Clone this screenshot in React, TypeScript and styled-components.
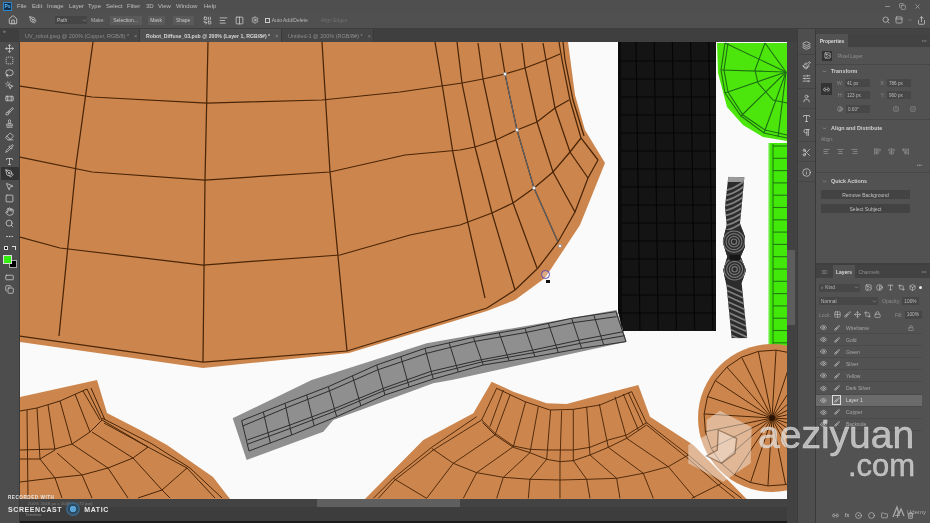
import React from "react";
import styled, { createGlobalStyle } from "styled-components";
import {
  Move, SquareDashed, Lasso, MousePointerClick, Bandage, Brush, Stamp, Eraser, Pipette, Type, PenTool,
  MousePointer2, Square, Hand, Search, MoreHorizontal, Home, Minus, Copy, X, PanelTop, Share, Settings,
  Link2, Image, Eye, Lock, Paintbrush, Crop, Layers, SlidersHorizontal, User, Pilcrow, Scissors,
  Info, Folder, Plus, Trash2, Circle, CircleDot, AlignLeft, AlignCenter, AlignRight, AlignStartVertical,
  AlignCenterVertical, AlignEndVertical, FlipHorizontal, FlipVertical, RectangleHorizontal, Combine, Columns2,
  Grid2x2, Contrast, ChevronDown, Box
} from "lucide-react";

const Global = createGlobalStyle`
  html, body { margin: 0; padding: 0; background: #222; }
  body { font-family: "Liberation Sans", Arial, sans-serif; }
  * { box-sizing: border-box; }
`;

const Shell = styled.div`
  position: relative; width: 930px; height: 523px; overflow: hidden; background: #4c4c4c;
  display: flex; flex-direction: column; color: #c4c4c4; filter: blur(0.35px);
`;
const MenuBar = styled.div`
  height: 12px; display: flex; align-items: center; background: #4f4f4f; font-size: 6px; padding-left: 3px;
`;
const PsLogo = styled.div`
  width: 9px; height: 9px; background: #10304f; border: 1px solid #2f86c8; color: #5db4ee; font-size: 5px; font-weight: 700;
  display: flex; align-items: center; justify-content: center; margin-right: 5px;
`;
const MenuItem = styled.span<{ $w: number }>` width: ${p => p.$w}px; color: #bdbdbd; `;
const WindowControls = styled.div`
  margin-left: auto; display: flex; gap: 8px; padding-right: 9px; color: #bbb; align-items: center;
`;
const OptionsBar = styled.div`
  height: 17px; display: flex; align-items: center; background: #505050; border-bottom: 1px solid #3e3e3e; font-size: 5px; padding-left: 8px; color: #c0c0c0;
`;
const OptionIcon = styled.span<{ $ml?: number }>`
  display: inline-flex; margin-left: ${p => p.$ml ?? 0}px; color: #d2d2d2;
`;
const OptionSelect = styled.div`
  margin-left: 18px; width: 32px; height: 8px; background: #454545; padding-left: 2px; display: flex; align-items: center; justify-content: space-between; font-size: 5px;
`;
const OptionLabel = styled.span<{ $ml: number; $dim?: boolean }>`
  margin-left: ${p => p.$ml}px; color: ${p => (p.$dim ? "#6f6f6f" : "#b5b5b5")}; white-space: nowrap;
`;
const OptionButton = styled.div<{ $w: number; $ml: number }>`
  width: ${p => p.$w}px; margin-left: ${p => p.$ml}px; height: 9px; background: #5a5a5a; color: #c8c8c8; font-size: 5px;
  display: flex; align-items: center; justify-content: center;
`;
const Check = styled.span`
  width: 5px; height: 5px; border: 1px solid #ccc; margin-left: 6px; margin-right: 2px; display: inline-block;
`;
const OptionRight = styled.div`
  margin-left: auto; display: flex; align-items: center; gap: 5px; padding-right: 4px; color: #ccc;
`;

const Main = styled.div` flex: 1; display: flex; min-height: 0; `;
const WorkColumn = styled.div` width: 797px; display: flex; flex-direction: column; `;
const TabBar = styled.div` height: 13px; flex: none; display: flex; background: #3f3f3f; `;
const Collapse = styled.div`
  width: 19px; flex: none; padding: 0 0 0 3px; color: #aaa; font-size: 5px; line-height: 5px;
`;
const DocTab = styled.div<{ $w: number; $active?: boolean }>`
  width: ${p => p.$w}px; display: flex; align-items: center; padding-left: 6px; white-space: nowrap;
  font-size: ${p => (p.$active ? "5.2px" : "5.5px")};
  background: ${p => (p.$active ? "#505050" : "#464646")};
  color: ${p => (p.$active ? "#d8d8d8" : "#8e8e8e")}; font-weight: ${p => (p.$active ? 700 : 400)};
  border-right: 1px solid #3a3a3a;
`;
const TabClose = styled.span` margin-left: 5px; color: #888; `;
const WorkArea = styled.div` flex: 1; display: flex; min-height: 0; `;
const Tools = styled.div`
  width: 20px; background: #4d4d4d; border-right: 1px solid #3a3a3a; display: flex; flex-direction: column; align-items: center;
`;
const Tool = styled.div<{ $active?: boolean }>`
  width: 18px; height: 12.55px; flex: none; display: flex; align-items: center; justify-content: center; color: #d4d4d4;
  background: ${p => (p.$active ? "#333" : "transparent")};
`;
const Swatches = styled.div` width: 18px; height: 28px; flex: none; position: relative; `;
const Fg = styled.div` position: absolute; left: 2px; top: 12px; width: 9px; height: 9px; background: #33ee11; border: 1px solid #ddd; z-index: 1; `;
const Bg = styled.div` position: absolute; left: 8px; top: 17px; width: 8px; height: 8px; background: #000; border: 1px solid #aaa; `;
const MiniDefault = styled.div` position: absolute; left: 3px; top: 3px; width: 4px; height: 4px; background: #111; border: 1px solid #ddd; `;
const MiniSwap = styled.div` position: absolute; left: 11px; top: 3px; width: 4px; height: 4px; border-top: 1px solid #ddd; border-right: 1px solid #ddd; `;
const CanvasWrap = styled.div` flex: 1; display: flex; flex-direction: column; background: #fafafa; min-width: 0; `;
const Scroller = styled.div` width: 10px; background: #424242; display: flex; flex-direction: column; padding-top: 208px; `;
const ScrollThumb = styled.div` width: 8px; height: 75px; background: #5d5d5d; `;
const HScroll = styled.div` height: 8px; flex: none; background: #434343; display: flex; align-items: center; `;
const StatusText = styled.span` width: 297px; flex: none; padding-left: 8px; font-size: 4.4px; color: #7f7f7f; white-space: nowrap; `;
const HThumb = styled.div` width: 143px; height: 8px; background: #5f5f5f; `;
const Status = styled.div`
  height: 16px; flex: none; background: #3d3d3d; border-bottom: 2px solid #1a1a1a; padding: 5px 0 0 5px; font-size: 4.4px; color: #8a8a8a;
`;
const Art = styled.svg` display: block; flex: none; `;

const Dock = styled.div`
  width: 19px; background: #4e4e4e; border-left: 1px solid #3c3c3c; border-right: 1px solid #3a3a3a; display: flex; flex-direction: column; align-items: center; padding-top: 6px; color: #cfcfcf;
`;
const DockGroup = styled.div`
  display: flex; flex-direction: column; align-items: center; gap: 4.5px; padding: 5.5px 0 4.5px; width: 100%; border-bottom: 1px solid #444;
`;
const Side = styled.div` width: 114px; display: flex; flex-direction: column; background: #525252; font-size: 5px; `;
const SideTop = styled.div` height: 5px; background: #444; flex: none; `;
const PanelTabs = styled.div` height: 13px; flex: none; display: flex; align-items: stretch; background: #424242; `;
const PanelTab = styled.div<{ $active?: boolean; $w: number }>`
  width: ${p => p.$w}px; display: flex; align-items: center; justify-content: center; font-weight: ${p => (p.$active ? 700 : 400)};
  background: ${p => (p.$active ? "#525252" : "transparent")}; color: ${p => (p.$active ? "#dcdcdc" : "#8f8f8f")};
`;
const TabMenu = styled.div` margin-left: auto; padding-right: 3px; display: flex; align-items: center; color: #999; `;
const PropsBody = styled.div` height: 218px; flex: none; display: flex; flex-direction: column; border-bottom: 2px solid #3f3f3f; `;
const LayerType = styled.div`
  height: 18px; flex: none; display: flex; align-items: center; gap: 6px; padding-left: 6px; color: #929292; border-bottom: 1px solid #474747;
`;
const TypeBox = styled.div`
  width: 10px; height: 10px; background: #333; display: flex; align-items: center; justify-content: center; color: #ddd;
`;
const Section = styled.div<{ $h: number; $pt?: number; $last?: boolean }>`
  height: ${p => p.$h}px; flex: none; padding: ${p => p.$pt ?? 0}px 5px 0; border-bottom: ${p => (p.$last ? "0" : "1px solid #474747")}; display: flex; flex-direction: column;
`;
const SectionHead = styled.div`
  height: 12px; flex: none; display: flex; align-items: center; gap: 4px; font-weight: 700; color: #cfcfcf; font-size: 5.4px; padding-left: 1px;
`;
const TransformGrid = styled.div` display: grid; grid-template-columns: 11px 1fr; column-gap: 5px; margin-top: 2px; `;
const LinkBox = styled.div`
  width: 11px; height: 12px; margin-top: 4px; background: #343434; display: flex; align-items: center; justify-content: center; color: #ddd;
`;
const Fields = styled.div` display: grid; grid-template-columns: 33px 41px; row-gap: 4px; `;
const Field = styled.div` display: flex; align-items: center; gap: 2px; color: #8f8f8f; height: 8px; justify-content: flex-end; `;
const FieldValue = styled.div<{ $w: number }>`
  width: ${p => p.$w}px; height: 8px; background: #474747; color: #bdbdbd; font-size: 4.6px; padding-left: 2px; display: flex; align-items: center;
`;
const AngleRow = styled.div`
  display: flex; align-items: center; margin-top: 6px; padding-left: 16px; color: #aaa; gap: 3px; font-size: 4.6px;
`;
const AlignLabel = styled.div` height: 10px; flex: none; display: flex; align-items: center; color: #8f8f8f; `;
const AlignIcons = styled.div` display: flex; align-items: center; margin-top: 4px; padding-left: 2px; color: #a5a5a5; `;
const AlignGap = styled.span<{ $w: number }>` width: ${p => p.$w}px; flex: none; `;
const More = styled.div` text-align: right; padding-right: 3px; margin-top: 8px; color: #999; font-size: 5px; line-height: 5px; `;
const QuickList = styled.div` display: flex; flex-direction: column; gap: 5px; margin-top: 3px; `;
const WideButton = styled.div`
  height: 9px; flex: none; width: 89px; background: #434343; display: flex; align-items: center; justify-content: center; color: #c0c0c0; font-size: 5px;
`;
const LayersPanel = styled.div` flex: 1; display: flex; flex-direction: column; min-height: 0; position: relative; `;
const LayerControls = styled.div` padding-top: 3px; `;
const LayerTools = styled.div` height: 13.5px; display: flex; align-items: center; padding-left: 3px; color: #bdbdbd; `;
const SmallSelect = styled.div<{ $w: number; $ml?: number }>`
  width: ${p => p.$w}px; margin-left: ${p => p.$ml ?? 0}px; height: 8px; background: #474747; color: #bbb; padding: 0 1px 0 2px; display: flex; align-items: center; justify-content: space-between; font-size: 4.8px;
`;
const FilterIcons = styled.div` display: flex; gap: 4px; margin-left: 5px; align-items: center; color: #cfcfcf; `;
const Toggle = styled.span` width: 3px; height: 3px; background: #eee; border-radius: 50%; margin-left: 3px; `;
const LockIcons = styled.div` display: flex; gap: 3px; margin-left: 3px; color: #c8c8c8; `;
const RowLabel = styled.span<{ $ml?: number }>` color: #8c8c8c; margin-left: ${p => p.$ml ?? 0}px; `;
const LayerList = styled.div` margin-top: 0.5px; display: flex; flex-direction: column; width: 106px; `;
const LayerRow = styled.div<{ $active?: boolean }>`
  height: 12.1px; flex: none; display: flex; align-items: center; border-bottom: 1px solid #4a4a4a; padding-left: 4px; gap: 6px;
  background: ${p => (p.$active ? "#6b6b6b" : "transparent")}; color: ${p => (p.$active ? "#dcdcdc" : "#a8a8a8")};
`;
const Thumb = styled.span<{ $active?: boolean }>`
  width: 7px; height: 8px; display: inline-flex; align-items: center; justify-content: center; color: #ddd; flex: none;
  outline: ${p => (p.$active ? "1px solid #ddd" : "0")};
`;
const EyeWrap = styled.span` display: inline-flex; color: #d0d0d0; flex: none; `;
const RowLock = styled.span` margin-left: auto; margin-right: 8px; display: inline-flex; color: #aaa; `;
const LayerFooter = styled.div`
  position: absolute; left: 16px; bottom: 3px; height: 10px; display: flex; align-items: center; gap: 6px; color: #d0d0d0; font-size: 5.5px;
`;
const UdemyMark = styled.div`
  position: absolute; right: 4px; bottom: 4px; display: flex; align-items: center; gap: 2px; color: #a9a9a9; font-size: 6px;
`;
const WmMain = styled.div`
  position: absolute; left: 758px; top: 413px; font-size: 39px; line-height: 44px; color: rgba(228, 228, 228, 0.72); -webkit-text-stroke: 0.5px rgba(228, 228, 228, 0.72); font-family: "Liberation Sans", sans-serif;
`;
const WmSub = styled.div`
  position: absolute; left: 848px; top: 448px; font-size: 31px; line-height: 36px; color: rgba(228, 228, 228, 0.72); -webkit-text-stroke: 0.4px rgba(228, 228, 228, 0.72); font-family: "Liberation Sans", sans-serif;
`;
const Recorded = styled.div`
  position: absolute; left: 8px; top: 494px; font-size: 4.6px; line-height: 7px; font-weight: 700; letter-spacing: 0.55px; color: #e4e4e4;
`;
const CastMark = styled.div`
  position: absolute; left: 8px; top: 502px; height: 14px; display: flex; align-items: center; gap: 4px; font-size: 7px; font-weight: 700; letter-spacing: 0.6px; color: #e8e8e8;
`;
const CastDot = styled.span`
  width: 14px; height: 14px; border-radius: 50%; background: radial-gradient(circle, #5aa3d6 0 3px, #2b4a62 3.4px 5px, #3c6380 5.4px); flex: none;
`;
const Cursor = styled.div`
  position: absolute; left: 541px; top: 270px; width: 9px; height: 9px; border: 1.4px solid #5b49ae; border-radius: 50%; background: rgba(255,255,255,.3);
`;
const CursorArrow = styled.div`
  position: absolute; left: 546px; top: 280px; width: 4px; height: 3px; background: #111;
`;

const W = "#4a2507";
type Pts = string[];

const bigWire: Pts = [
  "20,86 92,97 207,103 322,100 400,92 462,83 483,79 505,74 525,68 546,60 560,54",
  "20,157 92,172 205,180 330,172 405,155 460,150 475,147 496,140 517,130 537,122 555,108 569,100",
  "20,237 60,248 203,265 340,255 410,235 460,225 492,213 513,203 534,188 553,172 570,152 581,138",
  "20,336 203,362 347,351 487,308 515,290 538,268 558,242 575,212 588,178 598,160",
  "93,42 76,165 59,336",
  "208,42 205,180 203,362",
  "322,42 330,172 347,351",
  "435,42 443,90 453,153 468,223 485,298",
  "457,42 462,83 475,147 492,213 515,290",
  "478,43 483,79 496,140 513,203 537,268",
  "500,43 505,74 517,130 534,188 558,242",
  "522,43 525,68 537,122 553,172 575,212",
  "543,43 546,60 555,108 570,152 588,178",
  "559,42 562,60 570,100 581,138 598,160",
  "563,42 565,60 573,100 584,136"
];
const cornerWire: Pts = [
  "20,411 37,408 60,401 87,389 102,420",
  "91,388 105,420",
  "20,450 55,449 72,444 90,432 102,420",
  "20,459 40,459 55,450",
  "20,482 53,478 82,475 108,468 133,458 148,447",
  "102,418 152,444 190,468 222,498",
  "104,423 148,447 187,468 215,498",
  "27,410 28,498",
  "37,408 40,459 55,478 62,498",
  "48,405 55,450",
  "60,401 72,444",
  "75,394 90,432",
  "83,391 100,420",
  "57,453 82,475 92,498",
  "72,444 108,468 128,498",
  "92,432 133,458 162,490 170,498",
  "102,420 148,447",
  "187,468 162,490 138,498"
];
const centerWire: Pts = [
  "410,55 495,95 570,120 640,118 720,105 815,65",
  "365,150 405,190 460,228 510,238 560,240 640,240 690,232 745,210 800,195 860,158",
  "368,158 405,195 460,232 510,248 560,268 600,275 640,272 690,255 745,232 800,205 860,165",
  "215,235 280,280 350,308 430,322 510,328 600,330 680,328 770,325 850,310 925,290 985,255",
  "350,140 215,232 100,325 40,385",
  "365,150 220,240 105,330 55,385",
  "860,158 985,255 1085,340 1145,385",
  "860,165 980,262 1075,345 1125,385",
  "410,55 365,150", "430,60 390,170", "450,75 405,195", "497,95 460,230", "535,110 510,248",
  "572,120 560,268", "605,122 600,275", "640,118 640,272", "680,110 690,255", "718,102 745,232",
  "765,80 800,205", "790,72 835,180", "805,68 850,165", "815,65 860,160",
  "460,230 350,308 310,385", "560,268 510,328 505,385", "510,248 430,322 410,385", "600,275 600,385",
  "640,272 680,328 690,385", "690,255 770,325 780,385", "745,232 850,310 880,385", "800,205 925,290 1005,385",
  "405,195 280,280 200,385", "100,325 200,385", "1085,340 995,385"
];

const t1 = [[65,362],[195,310],[325,260],[470,195],[615,145],[760,112],[915,85],[1055,55],[1188,35]];
const t2 = [[68,378],[195,325],[330,272],[472,210],[620,160],[760,125],[915,98],[1060,68],[1190,50]];
const b2 = [[82,420],[210,375],[345,325],[490,265],[630,215],[780,180],[940,150],[1080,120],[1210,95]];
const b3 = [[84,432],[212,385],[347,333],[492,272],[634,224],[785,186],[942,158],[1082,130],[1214,107]];
const b1 = [[87,453],[215,405],[350,350],[495,285],[640,237],[790,195],[945,170],[1085,145],[1218,125]];
const toPts = (a: number[][]) => a.map(p => p.join(",")).join(" ");
const crossLines: string[] = [];
for (let i = 0; i < 9; i++) {
  crossLines.push(`${t1[i].join(",")} ${b1[i].join(",")}`);
  if (i < 8) {
    const m = (q: number[][]) => [(q[i][0] + q[i + 1][0]) / 2, (q[i][1] + q[i + 1][1]) / 2];
    crossLines.push(`${m(t1).join(",")} ${m(b1).join(",")}`);
  }
}

const gridV = Array.from({ length: 5 }, (_, i) => 636 + i * 18.2);
const gridH = Array.from({ length: 15 }, (_, i) => 61 + i * 18);
const greenRows = Array.from({ length: 17 }, (_, i) => 146 + i * 12.3);
const spokes = Array.from({ length: 24 }, (_, i) => {
  const a = (i * Math.PI * 2) / 24 + 0.06;
  return { x: 772 + Math.cos(a) * 68, y: 418 + Math.sin(a) * 68 };
});
const ring = spokes.map(s => `${s.x},${s.y}`).join(" ");

const zebraTop = Array.from({ length: 9 }, (_, i) => 440 + i * 15);
const zebraBottom = Array.from({ length: 10 }, (_, i) => 745 + i * 16);

const CanvasArt = () => (
  <Art width={767} height={457} viewBox="20 42 767 457">
    <defs>
      <clipPath id="zeb">
        <polygon points="355,410 403,412 395,500 390,550 405,590 405,620 392,650 408,690 395,730 412,895 365,895 350,740 340,690 352,650 338,605 350,555 345,500" />
      </clipPath>
      <clipPath id="big">
        <rect x="20" y="42" width="767" height="457" />
      </clipPath>
    </defs>
    <rect x="20" y="42" width="767" height="457" fill="#fafafa" />
    <g clipPath="url(#big)">
      <polygon points="20,342 203,368 349,353 487,311 515,300 545,278 580,225 605,163 585,130 575,95 568,42 20,42" fill="#cc864d" />
      <g fill="none" stroke={W} strokeWidth="1.25">
        {bigWire.map(p => <polyline key={p} points={p} />)}
      </g>

      <polygon points="20,397 97,380 107,413 140,430 167,445 213,477 230,499 20,499" fill="#cc864d" />
      <g fill="none" stroke={W} strokeWidth="1">
        {cornerWire.map(p => <polyline key={p} points={p} />)}
      </g>

      <g transform="translate(360 370) scale(0.3333)">
        <polygon points="15,387 190,210 340,130 395,35 460,65 560,100 620,102 720,75 835,45 870,140 1000,225 1160,387" fill="#cc864d" />
        <g fill="none" stroke={W} strokeWidth="2.8">
          {centerWire.map(p => <polyline key={p} points={p} />)}
        </g>
      </g>

      <g transform="translate(220 300) scale(0.3333)">
        <polygon points="38,355 275,240 620,130 1190,30 1220,125 695,240 640,250 340,360 310,395 80,480" fill="#8f8f8f" />
        <g fill="none" stroke="#2d2d2d" strokeWidth="3">
          <polyline points={toPts(t1)} />
          <polyline points={toPts(t2)} />
          <polyline points={toPts(b2)} />
          <polyline points={toPts(b3)} />
          <polyline points={toPts(b1)} />
          {crossLines.map(p => <polyline key={p} points={p} />)}
        </g>
      </g>

      <polygon points="618,42 716,42 716,331 623,331 618,310" fill="#141414" />
      <g stroke="#050505" strokeWidth="1.1">
        {gridV.map(x => <line key={x} x1={x} y1="42" x2={x + 4} y2="330" />)}
        {gridH.map(y => <line key={y} x1="618" y1={y} x2="716" y2={y} />)}
      </g>
      <polygon points="618,310 618,42 621,42 622,329" fill="#0a0a0a" />

      <polygon points="717,43 718,73 727,107 743,125 763,137 787,141 787,43" fill="#4ce60c" />
      <g fill="none" stroke="#1d6f12" strokeWidth="1.1">
        <polyline points="725,43 721,70 725,93 741,116 764,133 787,138" />
        <polyline points="728,43 724,70 728,92 743,115 765,130 787,135" />
        <polyline points="765,43 755,70 758,83 773,100 787,103" />
        <line x1="786" y1="72" x2="725" y2="43" />
        <line x1="786" y1="72" x2="721" y2="70" />
        <line x1="786" y1="72" x2="725" y2="93" />
        <line x1="786" y1="72" x2="741" y2="116" />
        <line x1="786" y1="72" x2="764" y2="133" />
        <line x1="786" y1="72" x2="778" y2="137" />
        <line x1="786" y1="72" x2="765" y2="43" />
      </g>

      <rect x="768" y="143" width="19" height="207" fill="#41e80a" />
      <rect x="768" y="143" width="1.4" height="207" fill="#a6f48c" />
      <line x1="773" y1="144" x2="773" y2="346" stroke="#1f7a10" strokeWidth="1.1" />
      <g stroke="#1f7a10" strokeWidth="1.1">
        {greenRows.map(y => <line key={y} x1="773" y1={y} x2="787" y2={y} />)}
      </g>

      <g transform="translate(610 40) scale(0.3333)">
        <g clipPath="url(#zeb)">
          <rect x="330" y="400" width="90" height="500" fill="#2c2c2c" />
          <rect x="350" y="410" width="55" height="16" fill="#9a9a9a" />
          <g fill="none" stroke="#808080" strokeWidth="5">
            {zebraTop.map(y => <path key={y} d={`M335 ${y + 14} Q375 ${y + 8} 410 ${y - 22}`} />)}
            {zebraBottom.map(y => <path key={y} d={`M340 ${y - 14} Q380 ${y + 4} 415 ${y + 20}`} />)}
          </g>
          <g fill="none" stroke="#777" strokeWidth="3.5">
            <rect x="335" y="570" width="75" height="150" fill="#2c2c2c" stroke="none" />
            <circle cx="372" cy="605" r="8" /><circle cx="372" cy="605" r="16" /><circle cx="372" cy="605" r="24" /><circle cx="372" cy="605" r="32" />
            <circle cx="374" cy="688" r="8" /><circle cx="374" cy="688" r="16" /><circle cx="374" cy="688" r="24" /><circle cx="374" cy="688" r="32" />
          </g>
          <rect x="358" y="645" width="32" height="16" fill="#161616" />
        </g>
      </g>

      <circle cx="772" cy="418" r="74" fill="#cc864d" />
      <polygon points={ring} fill="none" stroke={W} strokeWidth="1" />
      <g stroke={W} strokeWidth="1">
        {spokes.map(s => <line key={s.x} x1="772" y1="418" x2={s.x} y2={s.y} />)}
      </g>
      <circle cx="772" cy="418" r="3" fill="#2b1404" />

      <polyline points="505,74 517,130 534,188 558,242" fill="none" stroke="#5d6a78" strokeWidth="1" />
      <g fill="#eef0f2" stroke="#70707a" strokeWidth="0.5">
        <circle cx="505" cy="74" r="1.7" /><circle cx="517" cy="130" r="1.7" /><circle cx="534" cy="188" r="1.7" /><circle cx="560" cy="246" r="1.7" />
      </g>

      <g transform="translate(360 370) scale(0.3333)">
        <polygon points="1080,122 1175,172 1172,280 1090,335 985,280 985,225 1040,195 1040,150" fill="#fff" fillOpacity="0.42" />
        <polygon points="1075,180 1130,205 1125,250 1085,280 1040,258 1072,240" fill="#fff" fillOpacity="0.3" stroke="#6a4a30" strokeOpacity="0.6" strokeWidth="4" />
      </g>
    </g>
  </Art>
);

const menu: [string, number][] = [["File", 15], ["Edit", 15], ["Image", 22], ["Layer", 19], ["Type", 18], ["Select", 21], ["Filter", 19], ["3D", 12], ["View", 18], ["Window", 28], ["Help", 20]];
const toolIcons = [Move, SquareDashed, Lasso, MousePointerClick, Bandage, Brush, Stamp, Eraser, Pipette, Type, PenTool, MousePointer2, Square, Hand, Search, MoreHorizontal];
const layers = ["Wireframe", "Gold", "Green", "Silver", "Yellow", "Dark Silver", "Layer 1", "Copper", "Backside"];

export default function App() {
  return (
    <Shell>
      <Global />
      <MenuBar>
        <PsLogo>Ps</PsLogo>
        {menu.map(([m, w]) => <MenuItem key={m} $w={w}>{m}</MenuItem>)}
        <WindowControls>
          <Minus size={7} /><Copy size={7} /><X size={7} />
        </WindowControls>
      </MenuBar>
      <OptionsBar>
        <OptionIcon><Home size={10} /></OptionIcon>
        <OptionIcon $ml={11}><PenTool size={8} /></OptionIcon>
        <OptionSelect>Path<ChevronDown size={5} /></OptionSelect>
        <OptionLabel $ml={4}>Make:</OptionLabel>
        <OptionButton $w={32} $ml={5}>Selection...</OptionButton>
        <OptionButton $w={17} $ml={6}>Mask</OptionButton>
        <OptionButton $w={21} $ml={8}>Shape</OptionButton>
        <OptionIcon $ml={9}><Combine size={9} /></OptionIcon>
        <OptionIcon $ml={7}><AlignLeft size={9} /></OptionIcon>
        <OptionIcon $ml={7}><Columns2 size={9} /></OptionIcon>
        <OptionIcon $ml={7}><Settings size={8} /></OptionIcon>
        <Check />
        <OptionLabel $ml={0}>Auto Add/Delete</OptionLabel>
        <OptionLabel $ml={13} $dim>Align Edges</OptionLabel>
        <OptionRight>
          <Search size={8} /><PanelTop size={8} /><ChevronDown size={4} /><Share size={9} />
        </OptionRight>
      </OptionsBar>
      <Main>
        <WorkColumn>
          <TabBar>
            <Collapse>»</Collapse>
            <DocTab $w={121}>UV_robot.jpeg @ 200% (Copper, RGB/8) *<TabClose>×</TabClose></DocTab>
            <DocTab $w={142} $active>Robot_Diffuse_03.psb @ 200% (Layer 1, RGB/8#) *<TabClose>×</TabClose></DocTab>
            <DocTab $w={92}>Untitled-1 @ 200% (RGB/8#) *<TabClose>×</TabClose></DocTab>
          </TabBar>
          <WorkArea>
            <Tools>
              {toolIcons.map((Icon, i) => (
                <Tool key={i} $active={i === 10}><Icon size={9} /></Tool>
              ))}
              <Swatches><MiniDefault /><MiniSwap /><Fg /><Bg /></Swatches>
              <Tool><RectangleHorizontal size={9} /></Tool>
              <Tool><Copy size={9} /></Tool>
            </Tools>
            <CanvasWrap>
              <CanvasArt />
              <HScroll><StatusText>200%   2048 px x 2048 px (72 ppi)</StatusText><HThumb /></HScroll>
              <Status>Timeline</Status>
            </CanvasWrap>
            <Scroller><ScrollThumb /></Scroller>
          </WorkArea>
        </WorkColumn>
        <Dock>
          <DockGroup><Layers size={9} /></DockGroup>
          <DockGroup><Paintbrush size={9} /><SlidersHorizontal size={9} /></DockGroup>
          <DockGroup><User size={9} /></DockGroup>
          <DockGroup><Type size={9} /><Pilcrow size={9} /></DockGroup>
          <DockGroup><Scissors size={9} /></DockGroup>
          <DockGroup><Info size={9} /></DockGroup>
        </Dock>
        <Side>
          <SideTop />
          <PanelTabs>
            <PanelTab $w={32} $active>Properties</PanelTab>
            <TabMenu><MoreHorizontal size={6} /></TabMenu>
          </PanelTabs>
          <PropsBody>
            <LayerType><TypeBox><Image size={7} /></TypeBox>Pixel Layer</LayerType>
            <Section $h={55}>
              <SectionHead><ChevronDown size={5} />Transform</SectionHead>
              <TransformGrid>
                <LinkBox><Link2 size={7} /></LinkBox>
                <Fields>
                  <Field>W:<FieldValue $w={25}>41 px</FieldValue></Field>
                  <Field>X:<FieldValue $w={24}>786 px</FieldValue></Field>
                  <Field>H:<FieldValue $w={25}>123 px</FieldValue></Field>
                  <Field>Y:<FieldValue $w={24}>960 px</FieldValue></Field>
                </Fields>
              </TransformGrid>
              <AngleRow>
                <Contrast size={6} /><FieldValue $w={24}>0.00°</FieldValue>
                <AlignGap $w={17} /><FlipHorizontal size={6} /><AlignGap $w={5} /><FlipVertical size={6} />
              </AngleRow>
            </Section>
            <Section $h={53} $pt={2}>
              <SectionHead><ChevronDown size={5} />Align and Distribute</SectionHead>
              <AlignLabel>Align:</AlignLabel>
              <AlignIcons>
                <AlignLeft size={7} /><AlignGap $w={7} /><AlignCenter size={7} /><AlignGap $w={7} /><AlignRight size={7} />
                <AlignGap $w={16} />
                <AlignStartVertical size={7} /><AlignGap $w={7} /><AlignCenterVertical size={7} /><AlignGap $w={7} /><AlignEndVertical size={7} />
              </AlignIcons>
              <More>•••</More>
            </Section>
            <Section $h={60} $pt={2} $last>
              <SectionHead><ChevronDown size={5} />Quick Actions</SectionHead>
              <QuickList>
                <WideButton>Remove Background</WideButton>
                <WideButton>Select Subject</WideButton>
              </QuickList>
            </Section>
          </PropsBody>
          <LayersPanel>
            <PanelTabs>
              <PanelTab $w={17}>3D</PanelTab>
              <PanelTab $w={22} $active>Layers</PanelTab>
              <PanelTab $w={28}>Channels</PanelTab>
              <TabMenu><MoreHorizontal size={6} /></TabMenu>
            </PanelTabs>
            <LayerControls>
              <LayerTools>
                <SmallSelect $w={41}><span>⌕ Kind</span><ChevronDown size={5} /></SmallSelect>
                <FilterIcons>
                  <Image size={7} /><Contrast size={7} /><Type size={7} /><Crop size={7} /><Box size={7} />
                </FilterIcons>
                <Toggle />
              </LayerTools>
              <LayerTools>
                <SmallSelect $w={59}><span>Normal</span><ChevronDown size={5} /></SmallSelect>
                <RowLabel $ml={4}>Opacity:</RowLabel>
                <SmallSelect $w={17} $ml={2}>100%</SmallSelect>
              </LayerTools>
              <LayerTools>
                <RowLabel>Lock:</RowLabel>
                <LockIcons>
                  <Grid2x2 size={7} /><Brush size={7} /><Move size={7} /><Crop size={7} /><Lock size={7} />
                </LockIcons>
                <RowLabel $ml={14}>Fill:</RowLabel>
                <SmallSelect $w={17} $ml={2}>100%</SmallSelect>
              </LayerTools>
            </LayerControls>
            <LayerList>
              {layers.map((l, i) => (
                <LayerRow key={l} $active={l === "Layer 1"}>
                  <EyeWrap><Eye size={7} /></EyeWrap>
                  <Thumb $active={l === "Layer 1"}><Brush size={6} /></Thumb>
                  {l}
                  {i === 0 && <RowLock><Lock size={6} /></RowLock>}
                </LayerRow>
              ))}
            </LayerList>
            <LayerFooter>
              <Link2 size={7} /><span>fx</span><CircleDot size={7} /><Circle size={7} /><Folder size={7} /><Plus size={7} /><Trash2 size={7} />
            </LayerFooter>
          </LayersPanel>
        </Side>
      </Main>
      <Cursor />
      <CursorArrow />
      <WmMain>aeziyuan</WmMain>
      <WmSub>.com</WmSub>
      <Recorded>RECORDED WITH</Recorded>
      <CastMark>SCREENCAST<CastDot />MATIC</CastMark>
      <UdemyMark>
        <svg width="13" height="14" viewBox="0 0 13 14" fill="none" stroke="#a9a9a9" strokeWidth="1.3">
          <path d="M1 12 L5 2 L7 9 L9 4 L12 11" />
        </svg>
        Udemy
      </UdemyMark>
    </Shell>
  );
}
